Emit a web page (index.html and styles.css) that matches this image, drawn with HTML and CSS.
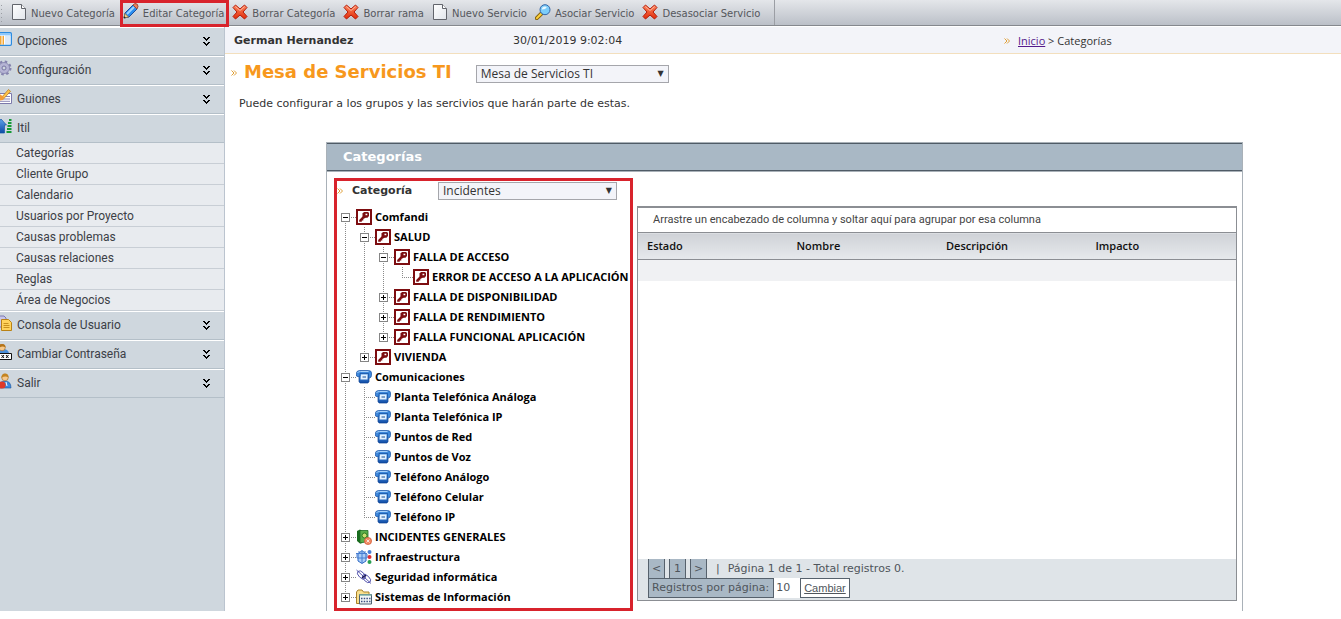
FILE: index.html
```html
<!DOCTYPE html>
<html lang="es">
<head>
<meta charset="utf-8">
<meta name="viewport" content="width=device-width, initial-scale=1">
<title>Mesa de Servicios TI - Categorías</title>
<link rel="stylesheet" href="styles.css">
</head>
<body>
<svg class="sprite" aria-hidden="true">
  <defs>
    <linearGradient id="g-blue" x1="0" y1="0" x2="0" y2="1"><stop offset="0" stop-color="#5ea4ea"/><stop offset="1" stop-color="#0d4aa5"/></linearGradient>
    <linearGradient id="g-red" x1="0" y1="0" x2="0" y2="1"><stop offset="0" stop-color="#ff8a60"/><stop offset="1" stop-color="#e02a08"/></linearGradient>
    <linearGradient id="g-page" x1="0" y1="0" x2="1" y2="1"><stop offset="0" stop-color="#fff"/><stop offset="1" stop-color="#e2e6ec"/></linearGradient>
  </defs>
  <symbol id="i-page" viewBox="0 0 16 16"><path d="M1.500 .5h9l4 4v11h-13z" fill="url(#g-page)" stroke="#62656c"/><path d="M10.500 .5v4h4" fill="#fff" stroke="#62656c"/></symbol>
  <symbol id="i-edit" viewBox="0 0 16 16"><path d="M1 15l1-5 8-8 4 4-8 8z" fill="#2a8df0" stroke="#1c4f9c"/><path d="M4 11l7-7" stroke="#9fd4ff" stroke-width="2"/><path d="M10 2l2-1.500q3 0 3 3L14 6z" fill="#e8805c" stroke="#9c4a38"/><path d="M1 15l1-4.500L5.500 14z" fill="#f6d58c" stroke="#8a6a30" stroke-width=".7"/><path d="M.7 15.300l.6-2 1.500 1.500z" fill="#222"/></symbol>
  <symbol id="i-x" viewBox="0 0 16 16"><path d="M3.500 1L8 5l4.500-4L15 3.500 11 8l4 4.500-2.500 2.500L8 11l-4.500 4L1 12.500 5 8 1 3.500z" fill="url(#g-red)" stroke="#b51c0a" stroke-linejoin="round"/><path d="M3.500 2.500L8 6.500l4.500-4" fill="none" stroke="#ffb59a"/></symbol>
  <symbol id="i-search" viewBox="0 0 16 16"><path d="M1.800 14.200L6.500 9.500" stroke="#8a6510" stroke-width="4" stroke-linecap="round"/><path d="M1.900 14.100L6 10" stroke="#ffd23c" stroke-width="2" stroke-linecap="round"/><circle cx="10" cy="5.700" r="5" fill="#7ccdfa" stroke="#3566a8"/><path d="M6.800 5.500a3.200 3.200 0 0 1 5-2.500q-1 2.500-5 2.500z" fill="#e8f8ff"/></symbol>
  <symbol id="i-panel" viewBox="0 0 16 16"><rect x=".7" y="1.700" width="14.600" height="12.600" rx="1" fill="#fff" stroke="#2b8be0" stroke-width="1.400"/><path d="M1.500 2.500h13v2h-13z" fill="#8cc8ff"/><path d="M1.500 5h6.500v8.500h-6.500z" fill="#f4a735"/><path d="M6 4.500v9M8.500 4.500v9" stroke="#fff"/><path d="M9 5h5.500v8.500H9z" fill="#dce9f8"/></symbol>
  <symbol id="i-gear" viewBox="0 0 16 16"><circle cx="8" cy="8" r="5.500" fill="#b5b4d4" stroke="#8f8db5"/><circle cx="8" cy="8" r="6.500" fill="none" stroke="#8583ae" stroke-width="2" stroke-dasharray="2.550 2.550"/><circle cx="8" cy="8" r="2" fill="#cfd7de" stroke="#7674a2"/></symbol>
  <symbol id="i-note" viewBox="0 0 16 16"><path d="M1 4.500h14.500v10H1z" fill="#fff" stroke="#7c7aab"/><path d="M9 7.500h5M3 10h11M3 12.300h11" stroke="#8a86b5"/><path d="M5 9l7.500-8.500 2 1.800L7 10.500z" fill="#ffc44a" stroke="#b57616" stroke-width=".7"/><path d="M1 3l7 5-1 3-5 1z" fill="#f39b35"/></symbol>
  <symbol id="i-up" viewBox="0 0 16 16"><path d="M0 7l5-6 5.500 6H8.500v8H2V7z" fill="url(#g-blue)" stroke="#1557a8" stroke-width=".7"/><path d="M13 2h2.500M12 5h3.500M11.500 8h4M11 11h4.500M10.500 14h5" stroke="#159a34" stroke-width="2"/></symbol>
  <symbol id="i-copy" viewBox="0 0 16 16"><path d="M1 1h7l2 2v9H1z" fill="#c9c6e8" stroke="#7a78b2"/><path d="M5.500 4.500h7l3 3v8h-10z" fill="#ffd35c" stroke="#b98215"/><path d="M7.500 8.500h5M7.500 10.500h6M7.500 12.500h6" stroke="#c7901e"/></symbol>
  <symbol id="i-pass" viewBox="0 0 16 16"><path d="M2 9q0-4 5-4t6 4z" fill="#4b8ed8"/><circle cx="6" cy="3.500" r="3.300" fill="#f6c98d" stroke="#9a6420" stroke-width=".6"/><path d="M2.500 4q0-4 3.500-4t3.500 3.500Q6 1.500 2.500 4z" fill="#b57418"/><path d="M.5 9.500h15v6H.5z" fill="#fff" stroke="#111"/><path d="M5.500 11l2.500 3m0-3l-2.500 3m4.500-3l2.500 3m0-3l-2.500 3" stroke="#111"/></symbol>
  <symbol id="i-exit" viewBox="0 0 16 16"><path d="M3 15q0-7 6-7t6 7z" fill="#3c8be0" stroke="#1d5499" stroke-width=".6"/><circle cx="9" cy="4.500" r="3.300" fill="#f6c98d" stroke="#9a6420" stroke-width=".6"/><path d="M5.500 5q0-4.500 3.500-4.500t3.500 4Q9 2.500 5.500 5z" fill="#c48420"/><circle cx="6" cy="12" r="3.600" fill="#e03a28"/><path d="M10 9l1 4" stroke="#fff"/></symbol>
  <symbol id="i-key" viewBox="0 0 16 16"><path d="M1 1h14v14H1z" fill="#fff" stroke="#7d0d10" stroke-width="2"/><path d="M7 7L3.200 11v1.800h2.600v-1.400h1.500V10L10 8.500z" fill="#7d0d10"/><path d="M6.500 4.500L8 3h4l1 1v3l-1.500 1.800H8L6.500 7.500z" fill="#7d0d10"/><path d="M9.500 4.700h1.800v1.500H9.500z" fill="#fff"/></symbol>
  <symbol id="i-phone" viewBox="0 0 16 16"><path d="M3 4h10v8.500l-1 1.500H4l-1-1.500z" fill="url(#g-blue)" stroke="#0f4391" stroke-width=".7"/><path d="M.5 7V3.500Q1 1.500 4 1.500h8.500q3 0 3 2.500v2.500q0 2-2 2.500l-1-.5v-4H4V7q-2 1.500-3.500 0z" fill="#3d88dc" stroke="#1751a3" stroke-width=".7"/><path d="M1.500 4q.5-1.500 3-1.500h8" fill="none" stroke="#a6d0fa"/><path d="M5 5.500h6.500v5H4.500z" fill="#e4f1ff"/><path d="M6.500 7h3.500v2H6.500z" fill="#7b9fca"/></symbol>
  <symbol id="i-book" viewBox="0 0 16 16"><path d="M1 2l3-1.500L6 2v12l-2 .5L1 12z" fill="#186b1d"/><path d="M4 1.500h8v11L4 14z" fill="#5aae4a" stroke="#1d6d22" stroke-width=".8"/><circle cx="8.500" cy="6.500" r="2.500" fill="#c9de72" stroke="#2f7d20"/><circle cx="12" cy="12" r="3.600" fill="#f28a64" stroke="#d05a35" stroke-width=".7"/><path d="M10.500 10.500l3 3m0-3l-3 3" stroke="#ffe2d5"/></symbol>
  <symbol id="i-infra" viewBox="0 0 16 16"><path d="M2 5l4-3.500 4 3.500v7l-4 2.500L2 12z" fill="#a9cdf8" stroke="#316ac4"/><path d="M0 4.500h11M3 2v3M9 2v3M6 2v12M1 5v4h10V5" fill="none" stroke="#477ed2"/><circle cx="13.500" cy="3" r="2" fill="#4880d8"/><circle cx="13.500" cy="8" r="2" fill="#dc3038"/><circle cx="13.500" cy="13" r="2" fill="#2aa052"/></symbol>
  <symbol id="i-chain" viewBox="0 0 16 16"><g fill="none" stroke="#4a4aa8" stroke-width=".9"><path d="M.5 1L15 14.500"/><ellipse cx="5.500" cy="6" rx="5" ry="2.800" transform="rotate(45 5.500 6)"/><ellipse cx="10.500" cy="9.500" rx="5" ry="2.800" transform="rotate(45 10.500 9.500)"/></g><path d="M6 9l4-3" stroke="#17174e" stroke-width="1.500"/></symbol>
  <symbol id="i-folder" viewBox="0 0 16 16"><path d="M.5 14.500V3L2 1h4l1.500 2H13v11.500z" fill="#f9df8c" stroke="#a8812a"/><path d="M3.500 5.500h12v9.500h-12z" fill="#f2f6f6" stroke="#4b6172"/><path d="M3.500 6h12" stroke="#7cb0a4" stroke-width="1.500"/><path d="M5 9.500h9.500M5 12.500h9.500" stroke="#3d4f80" stroke-width="1.500" stroke-dasharray="1.500 1.200"/></symbol>
  <symbol id="i-more" viewBox="0 0 8 10"><path d="M0 0h2v1h1v1h1V1h1V0h2v1H6v1H5v1H4v1H3V3H2V2H1V1H0zM0 5h2v1h1v1h1V6h1V5h2v1H6v1H5v1H4v1H3V8H2V7H1V6H0z" fill="#000"/></symbol>
  <symbol id="i-arrows" viewBox="0 0 6 6"><path d="M.5 .5L3 3 .5 5.500M3 .5L5.500 3 3 5.500" fill="none" stroke="#e0a038"/></symbol>
</svg>

<div class="toolbar" role="toolbar">
  <span class="grip"></span>
  <button type="button" class="tool"><svg><use href="#i-page"/></svg>Nuevo Categoría</button>
  <button type="button" class="tool marked"><svg><use href="#i-edit"/></svg>Editar Categoría</button>
  <button type="button" class="tool"><svg><use href="#i-x"/></svg>Borrar Categoría</button>
  <button type="button" class="tool"><svg><use href="#i-x"/></svg>Borrar rama</button>
  <button type="button" class="tool"><svg><use href="#i-page"/></svg>Nuevo Servicio</button>
  <button type="button" class="tool"><svg><use href="#i-search"/></svg>Asociar Servicio</button>
  <button type="button" class="tool"><svg><use href="#i-x"/></svg>Desasociar Servicio</button>
  <span class="divider"></span>
</div>

<div class="app">
  <nav class="side">
    <button type="button" class="group"><svg class="ico"><use href="#i-panel"/></svg><span>Opciones</span><svg class="more"><use href="#i-more"/></svg></button>
    <button type="button" class="group"><svg class="ico"><use href="#i-gear"/></svg><span>Configuración</span><svg class="more"><use href="#i-more"/></svg></button>
    <button type="button" class="group"><svg class="ico"><use href="#i-note"/></svg><span>Guiones</span><svg class="more"><use href="#i-more"/></svg></button>
    <button type="button" class="group"><svg class="ico"><use href="#i-up"/></svg><span>Itil</span></button>
    <ul class="sub">
      <li><a href="#">Categorías</a></li>
      <li><a href="#">Cliente Grupo</a></li>
      <li><a href="#">Calendario</a></li>
      <li><a href="#">Usuarios por Proyecto</a></li>
      <li><a href="#">Causas problemas</a></li>
      <li><a href="#">Causas relaciones</a></li>
      <li><a href="#">Reglas</a></li>
      <li><a href="#">Área de Negocios</a></li>
    </ul>
    <button type="button" class="group"><svg class="ico"><use href="#i-copy"/></svg><span>Consola de Usuario</span><svg class="more"><use href="#i-more"/></svg></button>
    <button type="button" class="group"><svg class="ico"><use href="#i-pass"/></svg><span>Cambiar Contraseña</span><svg class="more"><use href="#i-more"/></svg></button>
    <button type="button" class="group"><svg class="ico"><use href="#i-exit"/></svg><span>Salir</span><svg class="more"><use href="#i-more"/></svg></button>
  </nav>

  <main class="main">
    <header class="info">
      <strong class="user">German Hernandez</strong>
      <span class="date">30/01/2019 9:02:04</span>
      <span class="crumbs"><svg class="arrows"><use href="#i-arrows"/></svg><span><a href="#">Inicio</a> &gt; Categorías</span></span>
    </header>

    <div class="heading">
      <svg class="arrows"><use href="#i-arrows"/></svg>
      <h1>Mesa de Servicios TI</h1>
      <span class="pick"><select aria-label="Mesa de servicios"><option>Mesa de Servicios TI</option></select><i>▼</i></span>
    </div>
    <p class="intro">Puede configurar a los grupos y las sercivios que harán parte de estas.</p>

    <section class="panel">
      <h2>Categorías</h2>
      <div class="panel-body">
        <div class="tree-box">
          <div class="filter">
            <svg class="arrows"><use href="#i-arrows"/></svg>
            <label for="cat">Categoría</label>
            <span class="pick"><select id="cat"><option>Incidentes</option></select><i>▼</i></span>
          </div>
          <ul class="tree">
            <li><div class="node"><button type="button" class="tg minus" aria-label="Contraer"></button><svg><use href="#i-key"/></svg>Comfandi</div>
              <ul>
                <li><div class="node"><button type="button" class="tg minus" aria-label="Contraer"></button><svg><use href="#i-key"/></svg>SALUD</div>
                  <ul>
                    <li><div class="node"><button type="button" class="tg minus" aria-label="Contraer"></button><svg><use href="#i-key"/></svg>FALLA DE ACCESO</div>
                      <ul>
                        <li><div class="node"><span class="leaf"></span><svg><use href="#i-key"/></svg>ERROR DE ACCESO A LA APLICACIÓN</div></li>
                      </ul>
                    </li>
                    <li><div class="node"><button type="button" class="tg plus" aria-label="Expandir"></button><svg><use href="#i-key"/></svg>FALLA DE DISPONIBILIDAD</div></li>
                    <li><div class="node"><button type="button" class="tg plus" aria-label="Expandir"></button><svg><use href="#i-key"/></svg>FALLA DE RENDIMIENTO</div></li>
                    <li><div class="node"><button type="button" class="tg plus" aria-label="Expandir"></button><svg><use href="#i-key"/></svg>FALLA FUNCIONAL APLICACIÓN</div></li>
                  </ul>
                </li>
                <li><div class="node"><button type="button" class="tg plus" aria-label="Expandir"></button><svg><use href="#i-key"/></svg>VIVIENDA</div></li>
              </ul>
            </li>
            <li><div class="node"><button type="button" class="tg minus" aria-label="Contraer"></button><svg><use href="#i-phone"/></svg>Comunicaciones</div>
              <ul>
                <li><div class="node"><span class="leaf"></span><svg><use href="#i-phone"/></svg>Planta Telefónica Análoga</div></li>
                <li><div class="node"><span class="leaf"></span><svg><use href="#i-phone"/></svg>Planta Telefónica IP</div></li>
                <li><div class="node"><span class="leaf"></span><svg><use href="#i-phone"/></svg>Puntos de Red</div></li>
                <li><div class="node"><span class="leaf"></span><svg><use href="#i-phone"/></svg>Puntos de Voz</div></li>
                <li><div class="node"><span class="leaf"></span><svg><use href="#i-phone"/></svg>Teléfono Análogo</div></li>
                <li><div class="node"><span class="leaf"></span><svg><use href="#i-phone"/></svg>Teléfono Celular</div></li>
                <li><div class="node"><span class="leaf"></span><svg><use href="#i-phone"/></svg>Teléfono IP</div></li>
              </ul>
            </li>
            <li><div class="node"><button type="button" class="tg plus" aria-label="Expandir"></button><svg><use href="#i-book"/></svg>INCIDENTES GENERALES</div></li>
            <li><div class="node"><button type="button" class="tg plus" aria-label="Expandir"></button><svg><use href="#i-infra"/></svg>Infraestructura</div></li>
            <li><div class="node"><button type="button" class="tg plus" aria-label="Expandir"></button><svg><use href="#i-chain"/></svg>Seguridad informática</div></li>
            <li><div class="node"><button type="button" class="tg plus" aria-label="Expandir"></button><svg><use href="#i-folder"/></svg>Sistemas de Información</div></li>
          </ul>
        </div>

        <div class="grid">
          <div class="drop">Arrastre un encabezado de columna y soltar aquí para agrupar por esa columna</div>
          <table>
            <thead><tr><th>Estado</th><th>Nombre</th><th>Descripción</th><th>Impacto</th></tr></thead>
            <tbody><tr><td></td><td></td><td></td><td></td></tr></tbody>
          </table>
          <div class="pager">
            <div class="pages">
              <button type="button">&lt;</button>
              <button type="button">1</button>
              <button type="button">&gt;</button>
              <span class="bar">|</span>
              <span>Página 1 de 1 - Total registros 0.</span>
            </div>
            <div class="size">
              <label for="rows">Registros por página:</label>
              <input id="rows" type="text" value="10">
              <a href="#">Cambiar</a>
            </div>
          </div>
        </div>
      </div>
    </section>
  </main>
</div>
</body>
</html>
```
FILE: styles.css
```css
* { box-sizing: border-box; }
body { margin: 0; padding-bottom: 8px; background: #fff; color: #333; font: 11px/16px "DejaVu Sans", Verdana, sans-serif; }
button, select, input { font: inherit; color: inherit; margin: 0; padding: 0; border: 0; border-radius: 0; background: none; }
ul { list-style: none; margin: 0; padding: 0; }
svg { flex: none; display: block; }
.sprite { position: absolute; width: 0; height: 0; }

/* toolbar */
.toolbar { display: flex; gap: 8px; height: 26px; border-bottom: 1px solid #85888e; background: linear-gradient(#e4e6ea, #bbc0c8); }
.grip { width: 3px; background: repeating-linear-gradient(#9a9da3 0 1px, transparent 1px 4px) 1px 5px / 1px 17px no-repeat; }
.tool { display: flex; align-items: center; gap: 4px; font-size: 10px; line-height: 14px; color: #55575c; white-space: nowrap; padding-top: 3px; }
.tool svg { width: 16px; height: 16px; margin-bottom: 5px; }
.marked { position: relative; outline: 3px solid #d8232c; height: 21px; margin: 3px -2px 0 0; padding: 0 2px 0 0; }
.divider { width: 1px; margin-left: 6px; background: #9b9ea4; }

/* layout */
.app { display: flex; align-items: stretch; padding-top: 1px; }
.side { flex: none; width: 225px; background: #cfd7de; border-right: 1px solid #bbc4cf; font: 12px/16px Roboto, "Segoe UI", sans-serif; color: #3c4046; }
.main { flex: 1; min-width: 0; }

/* side menu */
.group { display: flex; align-items: center; width: 100%; height: 29px; padding: 0 13px 1px 0; text-align: left; background: #cfd7de; border-bottom: 1px solid #b4bfc8; border-top: 1px solid #fff; }
.group span { flex: 1; }
.ico { width: 16px; height: 16px; margin: 0 5px 4px -4px; }
.more { width: 8px; height: 10px; margin-top: 1px; }
.sub { background: #e8ebef; }
.sub li { height: 21px; border-bottom: 1px solid #c8ced5; }
.sub a { display: block; padding-left: 16px; line-height: 21px; color: inherit; text-decoration: none; }

/* info strip */
.info { display: grid; grid-template-columns: 279px 1fr 337px; align-items: center; height: 27px; padding: 1px 0 0 9px; background: #f3f4f9; border-bottom: 1px solid #f3dfbd; }
.crumbs { display: flex; align-items: center; gap: 8px; font: 11px/16px "Open Sans", "Trebuchet MS", sans-serif; }
.crumbs a { color: #551a8b; }
.arrows { width: 6px; height: 6px; }

/* heading */
.heading { display: flex; align-items: center; height: 38px; padding-left: 6px; }
.heading h1 { margin: 0 24px 2px 7px; font-size: 18px; line-height: 24px; color: #f7981d; white-space: nowrap; }
.heading .pick { width: 193px; margin-top: 2px; }
.pick { display: grid; align-items: center; font: 12px/16px "Open Sans", "Trebuchet MS", sans-serif; }
.pick select, .pick i { grid-area: 1 / 1; }
.pick select { appearance: none; width: 100%; height: 18px; padding: 0 20px 0 4px; border: 1px solid #a5a6ab; background: #f3f4f9; }
.pick i { justify-self: end; margin-right: 5px; font: 8px/10px "DejaVu Sans", sans-serif; pointer-events: none; }
.intro { margin: 4px 0 30px 14px; }

/* categories panel */
.panel { margin: 0 98px 0 101px; border: 1px solid #a9b1b8; border-bottom: 0; }
.panel h2 { margin: 0; padding: 0 16px; font-size: 13px; line-height: 26px; color: #fff; background: #a9b8c5; border: solid #4f5b66; border-width: 1px 0; box-shadow: 0 1px #a9b1b8; }
.panel-body { display: flex; align-items: flex-start; gap: 4px; padding: 7px 5px 0 7px; }
.tree-box { flex: none; width: 299px; border: 3px solid #d8232c; overflow: hidden; }
.filter { display: flex; align-items: center; height: 26px; padding-bottom: 6px; }
.filter .arrows { margin-right: 9px; }
.filter label { width: 86px; font-weight: bold; }
.filter .pick { width: 179px; }
.tree { color: #000; font: bold 11px/20px "Open Sans", Tahoma, sans-serif; white-space: nowrap; padding-bottom: 1px; }
.tree ul { padding-left: 19px; }
.tree li { background: repeating-linear-gradient(#8a8a8a 0 1px, transparent 1px 2px) 8px 0 / 1px 100% no-repeat; }
.tree li:last-child { background-size: 1px 10px; }
.tree > li:first-child { background-position: 8px 10px; }
.node { display: flex; align-items: center; gap: 3px; height: 20px; background: repeating-linear-gradient(90deg, #8a8a8a 0 1px, transparent 1px 2px) 8px 10px / 11px 1px no-repeat; }
.node svg { width: 16px; height: 16px; margin-bottom: 1px; }
.tg { width: 9px; height: 9px; margin: 1px 3px 0 4px; border: 1px solid #858585; }
.minus { background: linear-gradient(#000, #000) center / 5px 1px no-repeat, #fff; }
.plus { background: linear-gradient(#000, #000) center / 5px 1px no-repeat, linear-gradient(#000, #000) center / 1px 5px no-repeat, #fff; }
.leaf { width: 16px; }

/* records grid */
.grid { flex: 1; min-width: 0; display: flex; flex-direction: column; height: 395px; margin-top: 28px; border: 1px solid #8b8e93; border-top-width: 2px; font: 11px/16px "Open Sans", "Trebuchet MS", sans-serif; }
.drop { padding: 4px 15px; color: #444; font-family: Roboto, "Trebuchet MS", sans-serif; }
table { width: 100%; border-collapse: collapse; table-layout: fixed; }
th { height: 27px; padding: 0 9px; text-align: left; font-weight: 600; color: #111; background: linear-gradient(#cfd2d7, #e6e9ec); border: solid #8b8e93; border-width: 1px 0; }
td { height: 21px; padding: 0; background: #f0f1f3; }
.pager { margin-top: auto; padding: 0 10px 2px; background: #dfe4e8; color: #4f555b; font: 11px/19px "DejaVu Sans", Verdana, sans-serif; }
.pages { display: flex; gap: 4px; }
.pages button { width: 17px; height: 19px; background: #a9b8c5; border: solid #56616c; border-width: 0 1px; }
.pages .bar { margin: 0 4px 0 5px; }
.size { display: flex; line-height: 18px; }
.size label { padding: 0 4px 0 3px; background: #a9b8c5; border: 1px solid #56616c; }
.size input { width: 26px; padding: 0 2px; background: #fff; }
.size a { padding: 0 3px; color: inherit; background: #fff; border: 1px solid #56616c; font-family: "Liberation Sans", Arial, sans-serif; }
```
